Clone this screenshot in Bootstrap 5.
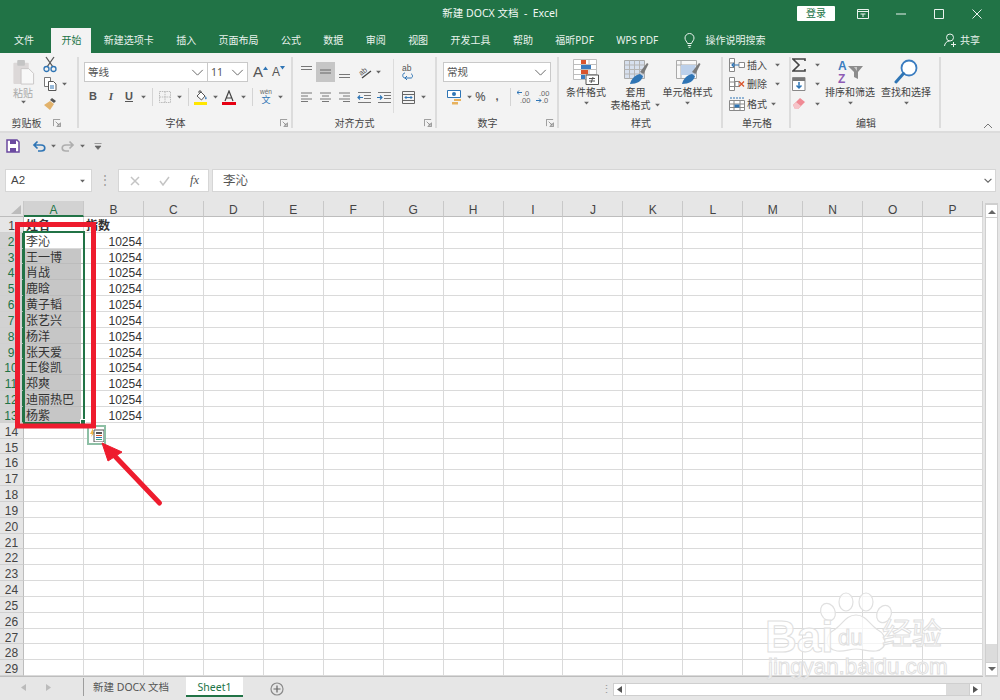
<!DOCTYPE html>
<html lang="zh">
<head>
<meta charset="utf-8">
<title>新建 DOCX 文档 - Excel</title>
<link href="https://cdn.jsdelivr.net/npm/bootstrap@5.3.0/dist/css/bootstrap.min.css" rel="stylesheet">
<style>
html,body{margin:0;height:700px;overflow:hidden;background:#e6e6e6}
body{font-family:"Noto Sans","Noto Sans CJK SC",sans-serif;font-size:10px;line-height:1.2;color:#444}
svg{display:block;flex:none}
.xl-app{width:1000px;height:700px;position:relative;overflow:hidden}
.xl-title{height:27px;background:#217346;color:#f2f8f4;font-size:10.5px}
.xl-side{flex:1 1 0}
.xl-login{width:38px;height:15px;background:#fff;color:#217346;margin-right:9px;font-size:10px;line-height:15px;text-align:center;border-radius:1px}
.xl-win{width:38px;height:27px}
.xl-tabs{height:26px;background:#217346;color:#e9f2ed;padding-left:4px;gap:2.4px}
.xl-tab{padding:0 10px;line-height:26px;white-space:nowrap;font-size:10px}
.xl-tab-on{background:#f3f3f3;color:#217346;margin-left:5px;margin-top:1px;line-height:25px}
.xl-tell{margin-left:13px;gap:11px}
.xl-share{margin-left:auto;padding-right:20px;gap:3px;line-height:26px}
.xl-ribbon{height:80px;background:#f3f3f3;border-bottom:2px solid #dcdcdc;position:relative}
.xl-g{display:flex;flex-direction:column;flex:none;position:relative}
.xl-g::after{content:"";position:absolute;right:0;top:4px;bottom:3px;width:2px;background:#dcdcdc}
.xl-body{height:62px;display:flex}
.xl-lab{height:15px;display:flex;align-items:center;font-size:10px;color:#444}
.xl-lab span{flex:1;text-align:center}
.xl-lab svg{margin-right:5px}
.g1{width:79px}.g2{width:214px}.g3{width:144px}.g4{width:122px}.g5{width:164px}.g6{width:68px}.g7{width:150px}
.xl-lab-l{padding-right:13px}
.xl-paste{width:46px;text-align:center;color:#a9a9a9;padding-top:6px}
.xl-paste svg{margin:0 auto}
.xl-paste div{margin-top:2px;line-height:13px}
.xl-mini{padding-top:2px;margin-left:-3px}
.xl-mini>div{height:19.5px;display:flex;align-items:center}
.xl-p2{padding:9px 0 0 5px}
.xl-combo{height:20px;background:#fff;border:1px solid #c9c9c9;display:flex;align-items:center;justify-content:space-between;padding:0 3px;font-size:10.5px;color:#555}
.xl-c1{width:124px}.xl-c2{width:41px;margin-left:-1px}.xl-c3{width:108px}
.xl-row{display:flex;align-items:center;height:20px}
.xl-row2{margin-top:5px}
.xl-slot{display:flex;justify-content:center;align-items:center;flex:none;height:20px}
.s18{width:18px}.s10{width:10px}.s8{width:8px}.s19{width:19px}.s20{width:20px}.s15{width:15px}.s22{width:22px}
.xl-bi{font-family:"Liberation Sans",sans-serif;font-weight:700;font-size:11px;color:#555}
.xl-it{font-style:italic;font-family:"Liberation Serif",serif}
.xl-un{text-decoration:underline}
.xl-big{font-family:"Liberation Sans",sans-serif;font-size:15px;color:#555}
.xl-sm{font-size:12px}
.xl-aa{margin-left:5px;gap:3px}
.xl-vsep{width:1px;height:18px;background:#d4d4d4}
.xl-on{background:#c6c6c6}
.xl-p3{padding:9px 0 0 4px}
.xl-pct{font-size:13px;color:#555}
.xl-vbar{width:1px;height:54px;background:#dcdcdc;margin-top:6px}
.xl-p4{padding:9px 0 0 6px}
.xl-tool{display:flex;flex-direction:column;align-items:center;text-align:center;padding-top:6px;line-height:13px;white-space:nowrap;flex:none}
.xl-tool svg{margin-bottom:1px}
.xl-tool .xl-cap{margin:2px auto 0}
.t54{width:54px}.t45{width:45px}.t59{width:59px}.t60{width:60px}.t52{width:52px}
.xl-line2{display:flex;align-items:center;gap:3px;white-space:nowrap}
.xl-cell{display:flex;align-items:center;height:19.5px;padding-left:6px;gap:1px}
.xl-cell span{width:27px;padding-left:1px}
.xl-cell span.xl-w22{width:23px}
.xl-stack{padding-top:2px;width:68px}
.xl-sig{width:33px;padding:2px 0 0 1px}
.xl-sig>div{height:19.5px;display:flex;align-items:center;gap:8px}
.xl-collapse{position:absolute;right:7px;bottom:2px}
.xl-qat{height:26px;padding-left:6px;background:#e6e6e6}
.xl-fbar{height:42px;padding:10px 4px 9px 5px;background:#e6e6e6}
.xl-name{width:87px;background:#fff;border:1px solid #d6d6d6;padding:0 5px;font-family:"Liberation Sans",sans-serif;font-size:11.5px;color:#444}
.xl-dots{width:26px;color:#999;font-size:12px;text-align:center}
.xl-fx{width:91px;background:#fff;border:1px solid #d6d6d6;margin-right:3px;padding:0 9px 0 11px}
.xl-fxt{font-family:"Liberation Serif",serif;font-style:italic;font-size:12.5px;color:#555}
.xl-input{flex:1;background:#fff;border:1px solid #d6d6d6;padding:0 3px 0 10px;font-size:12.5px;color:#555}
.xl-main{height:476px;position:relative}
.xl-sheet{position:relative;width:983px;display:grid;grid-template-columns:24px repeat(16,59.94px);grid-template-rows:16px repeat(29,15.83px);background:#fff;font-family:"Liberation Sans","Noto Sans CJK SC",sans-serif;font-size:12px;color:#333;border-bottom:1px solid #bdbdbd;overflow:hidden}
.xc{border-right:1px solid #dadada;border-bottom:1px solid #dadada;padding:2px 2px 0;line-height:14px;white-space:nowrap;overflow:visible;min-width:0}
.xh{background:#e6e6e6;border-right:1px solid #c8c8c8;border-bottom:1px solid #bdbdbd;text-align:center;color:#444;padding:2px 0 0}
.xh-corner{padding:0}
.xh-on{background:#d2d2d2;color:#217346;border-bottom:2px solid #217346}
.xr{background:#e6e6e6;border-right:1px solid #bdbdbd;border-bottom:1px solid #d0d0d0;text-align:center;color:#444;padding:2px 0 0}
.xr-on{background:#d2d2d2;color:#217346;border-right:2px solid #217346}
.xn{text-align:right;padding-right:1px}
.xb{font-weight:700}
.xs{background:#c6c6c6;border-bottom-color:#bcbcbc;box-shadow:inset -2px 0 0 #fff}
.xl-outline{position:absolute;left:23px;top:30px;width:62px;height:193px;border:2px solid #217346;pointer-events:none}
.xl-handle{position:absolute;right:-3px;bottom:-3px;width:6px;height:6px;background:#217346;border:1px solid #fff}
.xl-tag{position:absolute;left:87px;top:224px;width:19px;height:20px;border:2px solid #8dbfa5;background:#fff;display:flex;align-items:center;justify-content:center}
.xl-vs{position:absolute;right:2px;top:2px;bottom:0;width:13px;background:#fff;border:1px solid #cfcfcf;display:flex;flex-direction:column}
.xl-vbtn{height:14px;background:#fff;border:1px solid #cfcfcf;margin:0 -1px;display:flex;align-items:center;justify-content:center;flex:none}
.xl-vth{flex:1}.xl-vtr{height:18px;background:#dcdcdc}
.xl-foot{height:23px;background:#e6e6e6}
.xl-nav{width:84px;border-right:1px solid #9d9d9d;height:18px;padding-left:21px;gap:20px;margin-top:-3px}
.xl-stab{padding:0 9px 0 9px;font-size:10.5px;color:#555;width:102px;text-align:left;height:20px;line-height:20px;margin-top:-3px}
.xl-stab-on{width:57px;background:#fff;color:#217346;border-bottom:2px solid #217346;text-align:center;padding:0}
.xl-plus{margin-left:27px}
.xl-gap{margin-left:315px;color:#999;width:14px;font-size:11px}
.xl-hs{width:369px;height:13px;background:#dcdcdc;border:1px solid #cfcfcf;display:flex;margin-top:1px}
.xl-hb{width:12px;background:#fff;border-right:1px solid #cfcfcf;display:flex;align-items:center;justify-content:center;flex:none}
.xl-hth{width:320px;background:#fff}
.xl-hsp{flex:1}
.xl-hb-r{border-right:0;border-left:1px solid #cfcfcf}
.xl-overlay{position:absolute;left:0;top:0;pointer-events:none}
.xl-wm{position:absolute;left:760px;top:590px;width:195px;height:90px;pointer-events:none;color:rgba(255,255,255,.75);-webkit-text-stroke:1px #e0e0e0;font-family:"Liberation Sans",sans-serif}
.xl-wm-a,.xl-wm-b,.xl-wm-c,.xl-wm-d{position:absolute;white-space:nowrap;line-height:.9}
.xl-wm-a{left:5px;top:27px;font-size:44px;font-weight:700}
.xl-wm-b{left:78px;top:38px;font-size:22px}
.xl-wm-c{left:122px;top:28px;font-size:30px;font-family:"Noto Sans CJK SC",sans-serif}
.xl-wm-d{left:8px;top:67px;font-size:22.5px;letter-spacing:-.1px}
.xl-paw{position:absolute;left:0;top:0}
</style>
</head>
<body>
<svg width="0" height="0" class="position-absolute">
<symbol id="cr" viewBox="0 0 8 5"><path d="M1 1h6L4 4.500z" fill="#666"/></symbol>
<symbol id="chev" viewBox="0 0 14 8"><path d="M1 1l6 6 6-6" fill="none" stroke="#666" stroke-width="1.100"/></symbol>
<symbol id="lau" viewBox="0 0 9 9"><path d="M.5 8V.5H8M8.500 4v4.500H4M3 3l4 4M7 4.500V7H4.500" fill="none" stroke="#777" stroke-width=".8"/></symbol>
</svg>
<div class="xl-app">

<div class="xl-title d-flex align-items-center">
  <div class="xl-side"></div>
  <div class="text-nowrap">新建 DOCX 文档&nbsp; - &nbsp;Excel</div>
  <div class="xl-side d-flex align-items-center justify-content-end">
    <div class="xl-login">登录</div>
    <div class="xl-win d-flex align-items-center justify-content-center"><svg width="12" height="11" viewBox="0 0 12 11"><path d="M.5 1.500h11v9H.5zM.5 3.500h11M3.500 6h5M6 6v3" fill="none" stroke="#eaf3ee"/></svg></div>
    <div class="xl-win d-flex align-items-center justify-content-center"><svg width="10" height="2"><path d="M0 1h10" stroke="#eaf3ee"/></svg></div>
    <div class="xl-win d-flex align-items-center justify-content-center"><svg width="10" height="10"><path d="M.5.500h9v9h-9z" fill="none" stroke="#eaf3ee"/></svg></div>
    <div class="xl-win d-flex align-items-center justify-content-center me-1"><svg width="10" height="10"><path d="M.5.500l9 9M9.500.500l-9 9" stroke="#eaf3ee"/></svg></div>
  </div>
</div>

<div class="xl-tabs d-flex">
  <div class="xl-tab">文件</div>
  <div class="xl-tab xl-tab-on">开始</div>
  <div class="xl-tab">新建选项卡</div>
  <div class="xl-tab">插入</div>
  <div class="xl-tab">页面布局</div>
  <div class="xl-tab">公式</div>
  <div class="xl-tab">数据</div>
  <div class="xl-tab">审阅</div>
  <div class="xl-tab">视图</div>
  <div class="xl-tab">开发工具</div>
  <div class="xl-tab">帮助</div>
  <div class="xl-tab">福昕PDF</div>
  <div class="xl-tab">WPS PDF</div>
  <div class="xl-tell d-flex align-items-center">
    <svg width="11" height="15" viewBox="0 0 11 15"><path d="M3.500 10.500C3 8.500 1 7.500 1 5a4.500 4.500 0 0 1 9 0c0 2.500-2 3.500-2.500 5.500zM3.800 12.500h3.400M4.500 14.300h2" fill="none" stroke="#eaf3ee"/></svg>
    <span>操作说明搜索</span>
  </div>
  <div class="xl-share d-flex align-items-center">
    <svg width="13" height="14" viewBox="0 0 13 14"><circle cx="6" cy="4.500" r="3.500" fill="none" stroke="#eaf3ee"/><path d="M.5 13c.3-3 2.500-5 5-5M9.500 9v5M7 11.500h5" fill="none" stroke="#eaf3ee"/></svg>
    <span>共享</span>
  </div>
</div>

<div class="xl-ribbon d-flex">
  <!-- clipboard -->
  <div class="xl-g g1">
    <div class="xl-body">
      <div class="xl-paste">
        <svg width="26" height="26" viewBox="-2 0 26 27"><rect x="1" y="4" width="16" height="22" rx="1" fill="#dcd8d8"/><rect x="5" y="1" width="8" height="6" rx="1" fill="#c4c4c4"/><path d="M9 10h8l5 5v11H9z" fill="#f8f8f8" stroke="#c9c6c6"/></svg>
        <div>粘贴</div>
        <svg width="7" height="4"><use href="#cr"/></svg>
      </div>
      <div class="xl-mini">
        <div><svg width="14" height="17" viewBox="0 0 14 17"><path d="M3 1l7 10M11 1L4 11" stroke="#555" stroke-width="1.300"/><circle cx="3.500" cy="13" r="2.500" fill="none" stroke="#2f75b5" stroke-width="1.300"/><circle cx="10.500" cy="13" r="2.500" fill="none" stroke="#2f75b5" stroke-width="1.300"/></svg></div>
        <div class="gap-1"><svg width="14" height="14" viewBox="0 0 14 14"><path d="M1.500.500h6v9h-6z" fill="#fff" stroke="#777"/><path d="M5.500 4.500h5l2.500 2.500v6.500H5.500z" fill="#fff" stroke="#555"/><path d="M7 9h4M7 11h4" stroke="#2f75b5"/></svg><svg width="7" height="4"><use href="#cr"/></svg></div>
        <div><svg width="14" height="14" viewBox="0 0 14 14"><path d="M9 1l4 3-2 2-4-3z" fill="#555"/><path d="M7 4l4 3-4 6-6-5z" fill="#e2b26b"/></svg></div>
      </div>
    </div>
    <div class="xl-lab xl-lab-l"><span>剪贴板</span><svg width="8" height="8"><use href="#lau"/></svg></div>
  </div>
  <!-- font -->
  <div class="xl-g g2">
    <div class="xl-body xl-p2 flex-column">
      <div class="xl-row">
        <div class="xl-combo xl-c1"><span>等线</span><svg width="13" height="7"><use href="#chev"/></svg></div>
        <div class="xl-combo xl-c2"><span>11</span><svg width="13" height="7"><use href="#chev"/></svg></div>
        <div class="xl-aa d-flex">
          <div class="xl-slot s15 xl-big">A<svg width="5" height="4" viewBox="0 0 5 4" class="align-self-start mt-1"><path d="M0 4l2.500-3.500L5 4z" fill="#2f75b5"/></svg></div>
          <div class="xl-slot s15 xl-big xl-sm">A<svg width="5" height="4" viewBox="0 0 5 4" class="align-self-start mt-1"><path d="M0 0l2.500 3.500L5 0z" fill="#2f75b5"/></svg></div>
        </div>
      </div>
      <div class="xl-row xl-row2">
        <div class="xl-slot s18 xl-bi">B</div>
        <div class="xl-slot s18 xl-bi xl-it">I</div>
        <div class="xl-slot s18 xl-bi xl-un">U</div>
        <div class="xl-slot s10"><svg width="7" height="4"><use href="#cr"/></svg></div>
        <div class="xl-slot s8"><div class="xl-vsep"></div></div>
        <div class="xl-slot s18"><svg width="12" height="12" viewBox="0 0 12 12"><path d="M.5.500h11v11H.5zM6 .5v11M.5 6h11" fill="none" stroke="#bbb" stroke-dasharray="1.500 .8"/></svg></div>
        <div class="xl-slot s10"><svg width="7" height="4"><use href="#cr"/></svg></div>
        <div class="xl-slot s8"><div class="xl-vsep"></div></div>
        <div class="xl-slot s18"><svg width="14" height="15" viewBox="0 0 14 15"><path d="M3 6l4-4 4 4-3.500 4z" fill="#fff" stroke="#555"/><path d="M5 3V1h2v2" fill="none" stroke="#555"/><path d="M11.500 6c1.200 1.500 1.500 2.500.8 3.200-.8.500-1.500-.4-1-1.500z" fill="#2f75b5"/><rect y="12" width="13" height="3" fill="#ffe600"/></svg></div>
        <div class="xl-slot s10"><svg width="7" height="4"><use href="#cr"/></svg></div>
        <div class="xl-slot s18 flex-column"><svg width="14" height="15" viewBox="0 0 14 15"><path d="M3 11L7 1l4 10M4.500 8h5" fill="none" stroke="#444" stroke-width="1.200"/><rect y="12" width="14" height="3" fill="#e60012"/></svg></div>
        <div class="xl-slot s10"><svg width="7" height="4"><use href="#cr"/></svg></div>
        <div class="xl-slot s8"><div class="xl-vsep"></div></div>
        <div class="xl-slot s20"><svg width="18" height="20" viewBox="0 0 18 20"><text x="9" y="7" text-anchor="middle" font-size="6.500" fill="#666" font-family="Liberation Sans">wén</text><text x="9" y="16" text-anchor="middle" font-size="9" fill="#2f75b5" font-family="Noto Sans CJK SC">文</text></svg></div>
        <div class="xl-slot s8"><svg width="7" height="4"><use href="#cr"/></svg></div>
      </div>
    </div>
    <div class="xl-lab"><span>字体</span><svg width="8" height="8" class="ms-2"><use href="#lau"/></svg></div>
  </div>
  <!-- align -->
  <div class="xl-g g3">
    <div class="xl-body">
      <div class="xl-p3">
        <div class="xl-row">
          <div class="xl-slot s19"><svg width="13" height="16" viewBox="0 0 13 16"><path d="M1 2.500h11M1 5.500h11" stroke="#777"/></svg></div>
          <div class="xl-slot s19 xl-on"><svg width="13" height="10" viewBox="0 0 13 10"><path d="M1 3h11M1 6h11" stroke="#666"/></svg></div>
          <div class="xl-slot s19"><svg width="13" height="16" viewBox="0 0 13 16"><path d="M1 10.500h11M1 13.500h11" stroke="#777"/></svg></div>
          <div class="xl-slot s20"><svg width="20" height="20" viewBox="0 0 20 20"><text x="5" y="12" font-size="7.500" fill="#555" font-family="Liberation Sans" transform="rotate(-40 9 10)">ab</text><path d="M8 16L17 9" stroke="#444" stroke-width="1.300"/></svg></div>
          <div class="xl-slot s8"><svg width="7" height="4"><use href="#cr"/></svg></div>
        </div>
        <div class="xl-row xl-row2">
          <div class="xl-slot s19"><svg width="13" height="10" viewBox="0 0 13 10"><path d="M1 1h11M1 4h7M1 7h11M1 9.500h7" stroke="#777"/></svg></div>
          <div class="xl-slot s19"><svg width="13" height="10" viewBox="0 0 13 10"><path d="M1 1h11M3 4h7M1 7h11M3 9.500h7" stroke="#777"/></svg></div>
          <div class="xl-slot s19"><svg width="13" height="10" viewBox="0 0 13 10"><path d="M1 1h11M5 4h7M1 7h11M5 9.500h7" stroke="#777"/></svg></div>
          <div class="xl-slot s20"><svg width="14" height="11" viewBox="0 0 14 11"><path d="M1 5.500h5M3 3.500l-2 2 2 2" fill="none" stroke="#2f75b5" stroke-width="1.200"/><path d="M1 .5h13M7 3.500h7M7 6.500h7M1 10.500h13" stroke="#777"/></svg></div>
          <div class="xl-slot s19"><svg width="14" height="11" viewBox="0 0 14 11"><path d="M0 5.500h5M3 3.500l2 2-2 2" fill="none" stroke="#2f75b5" stroke-width="1.200"/><path d="M1 .5h13M7 3.500h7M7 6.500h7M1 10.500h13" stroke="#777"/></svg></div>
        </div>
      </div>
      <div class="xl-vbar"></div>
      <div class="xl-p3">
        <div class="xl-row"><div class="xl-slot s20"><svg width="14" height="18" viewBox="0 0 14 18"><text x="1" y="8" font-size="8.500" fill="#555" font-family="Liberation Sans">ab</text><path d="M4 10C1 10 1 15 4 15h6c2 0 2-4 0-4M6 13l-2 2 2 2" fill="none" stroke="#2f75b5"/></svg></div></div>
        <div class="xl-row xl-row2">
          <div class="xl-slot s20"><svg width="13" height="13" viewBox="0 0 13 13"><path d="M.5.500h12v12H.5zM.5 3.500h12M.5 9.500h12" fill="none" stroke="#666"/><path d="M3 6.500h7M4.500 5l-1.500 1.500L4.500 8M8.500 5L10 6.500 8.500 8" fill="none" stroke="#2f75b5"/></svg></div>
          <div class="xl-slot s10"><svg width="7" height="4"><use href="#cr"/></svg></div>
        </div>
      </div>
    </div>
    <div class="xl-lab"><span>对齐方式</span><svg width="8" height="8" class="ms-2"><use href="#lau"/></svg></div>
  </div>
  <!-- number -->
  <div class="xl-g g4">
    <div class="xl-body xl-p4 flex-column">
      <div class="xl-combo xl-c3"><span>常规</span><svg width="13" height="7"><use href="#chev"/></svg></div>
      <div class="xl-row xl-row2">
        <div class="xl-slot s22"><svg width="15" height="15" viewBox="0 0 15 15"><path d="M.5.500h13v7H.5z" fill="#fff" stroke="#2f75b5"/><circle cx="7" cy="4" r="2" fill="#2f75b5"/><path d="M7 9h7v2H7zM5 12h6v2.500H5z" fill="#e7b15d"/></svg></div>
        <div class="xl-slot s8"><svg width="7" height="4"><use href="#cr"/></svg></div>
        <div class="xl-slot s15 xl-pct">%</div>
        <div class="xl-slot s18 xl-bi">,</div>
        <div class="xl-slot s8"><div class="xl-vsep"></div></div>
        <div class="xl-slot s19"><svg width="14" height="16" viewBox="0 0 14 16"><path d="M0 3.500h5M2 1.500l-2 2 2 2" fill="none" stroke="#2f75b5"/><text x="6" y="6.500" font-size="7.500" fill="#666" font-family="Liberation Sans">.0</text><text x="3" y="14" font-size="7.500" fill="#666" font-family="Liberation Sans">.00</text></svg></div>
        <div class="xl-slot s19"><svg width="14" height="16" viewBox="0 0 14 16"><text x="3" y="6.500" font-size="7.500" fill="#666" font-family="Liberation Sans">.00</text><path d="M0 11.500h5M3 9.500l2 2-2 2" fill="none" stroke="#2f75b5"/><text x="6" y="14" font-size="7.500" fill="#666" font-family="Liberation Sans">.0</text></svg></div>
      </div>
    </div>
    <div class="xl-lab"><span>数字</span><svg width="8" height="8" class="ms-2"><use href="#lau"/></svg></div>
  </div>
  <!-- styles -->
  <div class="xl-g g5">
    <div class="xl-body">
      <div class="xl-tool t54">
        <svg width="26" height="26" viewBox="0 0 26 26"><path d="M.5.500h23v20H.5zM8.500.5v20M16 .5v20M.5 5.500h23M.5 10.500h23M.5 15.500h23" fill="#fff" stroke="#bdbdbd"/><path d="M8 1h5v4H8z" fill="#d9542c"/><path d="M8 6h10v4H8z" fill="#3a7cc0"/><path d="M8 11h7v4H8z" fill="#d9542c"/><path d="M8 16h4v4H8z" fill="#3a7cc0"/><path d="M13 16h12.500v9.500H13z" fill="#fff" stroke="#555"/><path d="M16 19.500h6M16 22h6M18 24l2-6" stroke="#555"/></svg>
        <div>条件格式</div>
        <svg class="xl-cap" width="7" height="4"><use href="#cr"/></svg>
      </div>
      <div class="xl-tool t45">
        <svg width="26" height="26" viewBox="0 0 26 26"><path d="M1.500 1.500h20v18h-20z" fill="#d7e0ee" stroke="#aaa"/><path d="M6.500 1.500v18M11.500 1.500v18M16.500 1.500v18M1.500 6h20M1.500 10.500h20M1.500 15h20" stroke="#b5b5b5" fill="none"/><path d="M17 13l7-9 1.500 1-5 10z" fill="#7a7a7a"/><path d="M7 25c1-5 5-9 10-10l3 2c-1 5-6 8-13 8z" fill="#2f75b5"/></svg>
        <div>套用</div>
        <div class="xl-line2">表格格式<svg width="7" height="4"><use href="#cr"/></svg></div>
      </div>
      <div class="xl-tool t59">
        <svg width="26" height="26" viewBox="0 0 26 26"><path d="M1.500 1.500h20v18h-20zM1.500 6h20M6 1.500v18" fill="#f8f8f8" stroke="#aaa"/><path d="M6 6h14.500v10H6z" fill="#bcd0ea"/><path d="M17 13l7-9 1.500 1-5 10z" fill="#7a7a7a"/><path d="M7 25c1-5 5-9 10-10l3 2c-1 5-6 8-13 8z" fill="#2f75b5"/></svg>
        <div>单元格样式</div>
        <svg class="xl-cap" width="7" height="4"><use href="#cr"/></svg>
      </div>
    </div>
    <div class="xl-lab"><span>样式</span></div>
  </div>
  <!-- cells -->
  <div class="xl-g g6">
    <div class="xl-body">
      <div class="xl-stack">
        <div class="xl-cell"><svg width="16" height="14" viewBox="0 0 16 14"><path d="M.5.500h5v13h-5zM.5 5h5M.5 9.500h5M10 4.500h5.500v5H10z" fill="#fff" stroke="#888"/><path d="M3 7h7M5 5l-2 2 2 2" fill="none" stroke="#2f75b5" stroke-width="1.200"/></svg><span>插入</span><svg width="7" height="4"><use href="#cr"/></svg></div>
        <div class="xl-cell"><svg width="16" height="14" viewBox="0 0 16 14"><path d="M.5.500h5v13h-5zM.5 5h5M.5 9.500h5M6 4.500h4v5H6z" fill="#fff" stroke="#888"/><path d="M10 4.500l5 5M15 4.500l-5 5" stroke="#d9542c" stroke-width="1.300"/></svg><span>删除</span><svg width="7" height="4"><use href="#cr"/></svg></div>
        <div class="xl-cell"><svg width="16" height="14" viewBox="0 0 16 14"><path d="M.5 3.500h15v10H.5zM.5 7h15M.5 10.500h15M5 3.500v10M11 3.500v10" fill="#fff" stroke="#888"/><path d="M5.500 7.500h5v3h-5z" fill="#2f75b5"/><path d="M1 1h14" stroke="#2f75b5" stroke-dasharray="2 1"/></svg><span class="xl-w22">格式</span><svg width="7" height="4"><use href="#cr"/></svg></div>
      </div>
    </div>
    <div class="xl-lab"><span>单元格</span></div>
  </div>
  <!-- editing -->
  <div class="xl-g g7">
    <div class="xl-body">
      <div class="xl-sig">
        <div><svg width="14" height="14" viewBox="0 0 14 14"><path d="M13 3V1H1l6 6-6 6h12v-2" fill="none" stroke="#444" stroke-width="1.600"/></svg><svg width="7" height="4"><use href="#cr"/></svg></div>
        <div><svg width="14" height="14" viewBox="0 0 14 14"><path d="M.5.500h12.500v13H.5z" fill="#fff" stroke="#888"/><path d="M1 1h12v3H1z" fill="#777"/><path d="M7 5v6M4.500 8.500L7 11l2.500-2.500" fill="none" stroke="#2f75b5" stroke-width="1.500"/></svg><svg width="7" height="4"><use href="#cr"/></svg></div>
        <div><svg width="14" height="13" viewBox="0 0 14 13"><path d="M1 8l7-7 5 4-7 7H3z" fill="#f08a94"/><path d="M1 8l3-3 5 4-3 3H3z" fill="#f6c3c8"/></svg><svg width="7" height="4"><use href="#cr"/></svg></div>
      </div>
      <div class="xl-tool t52">
        <svg width="28" height="26" viewBox="0 0 28 26"><text x="2" y="11" font-size="12" font-weight="700" fill="#3a7cc0" font-family="Liberation Sans">A</text><text x="2" y="24" font-size="12" font-weight="700" fill="#8e5bb5" font-family="Liberation Sans">Z</text><path d="M12 7h15l-5 6v7l-4-2v-5z" fill="#8c8c8c"/><path d="M14 8h4l3 4v-4h3" fill="#c8c8c8"/></svg>
        <div>排序和筛选</div>
        <svg class="xl-cap" width="7" height="4"><use href="#cr"/></svg>
      </div>
      <div class="xl-tool t60">
        <svg width="24" height="26" viewBox="0 0 24 26"><circle cx="15" cy="9" r="7.500" fill="#fff" stroke="#3a7cc0" stroke-width="1.800"/><path d="M9.500 14.500L2 23" stroke="#2f75b5" stroke-width="3" stroke-linecap="round"/></svg>
        <div>查找和选择</div>
        <svg class="xl-cap" width="7" height="4"><use href="#cr"/></svg>
      </div>
    </div>
    <div class="xl-lab"><span>编辑</span></div>
  </div>
  <svg class="xl-collapse" width="10" height="6" viewBox="0 0 10 6"><path d="M1 5l4-4 4 4" fill="none" stroke="#777"/></svg>
</div>

<div class="xl-qat d-flex align-items-center">
  <svg width="14" height="14" viewBox="0 0 14 14" class="me-2"><path d="M1 1h10l2 2v10H1z" fill="#fff" stroke="#6b4aa0" stroke-width="1.500"/><path d="M4 1h6v4H4zM4 9h6v4H4z" fill="#6b4aa0"/></svg>
  <svg width="14" height="12" viewBox="0 0 14 12" class="ms-1"><path d="M3 5h6c5 0 5 6 0 6H6M5.500 1.500L2 5l3.500 3.500" fill="none" stroke="#2f75b5" stroke-width="1.700"/></svg>
  <svg width="7" height="4" class="ms-1"><use href="#cr"/></svg>
  <svg width="14" height="12" viewBox="0 0 14 12" class="ms-1"><path d="M11 5H5c-5 0-5 6 0 6h3M8.500 1.500L12 5 8.500 8.500" fill="none" stroke="#aeaeae" stroke-width="1.700"/></svg>
  <svg width="7" height="4" class="ms-1"><use href="#cr"/></svg>
  <svg width="8" height="7" viewBox="0 0 8 7" class="ms-2"><path d="M.5.500h7M1 3h6L4 6.500z" fill="#666" stroke="#666" stroke-width=".6"/></svg>
</div>

<div class="xl-fbar d-flex">
  <div class="xl-name d-flex align-items-center justify-content-between"><span>A2</span><svg width="7" height="4"><use href="#cr"/></svg></div>
  <div class="xl-dots d-flex align-items-center justify-content-center">⋮</div>
  <div class="xl-fx d-flex align-items-center justify-content-between">
    <svg width="10" height="10"><path d="M1 1l8 8M9 1L1 9" stroke="#c4c4c4" stroke-width="1.500"/></svg>
    <svg width="11" height="10"><path d="M1 5l3 4 6-8" fill="none" stroke="#c4c4c4" stroke-width="1.500"/></svg>
    <span class="xl-fxt">fx</span>
  </div>
  <div class="xl-input d-flex align-items-center justify-content-between"><span>李沁</span><svg width="8" height="5" viewBox="0 0 14 8"><path d="M1 1l6 6 6-6" fill="none" stroke="#666" stroke-width="2"/></svg></div>
</div>

<div class="xl-main">
  <div class="xl-sheet" id="xlSheet"></div>
  <div class="xl-outline"><div class="xl-handle"></div></div>
  <div class="xl-tag"><svg width="14" height="14" viewBox="0 0 14 14"><path d="M3 0L0 6h2L1 9l4-5H3z" fill="#f2b84b"/><path d="M4 2h10v12H4z" fill="#fff" stroke="#555"/><path d="M6 4h6v2H6z" fill="#555"/><path d="M6 7.500h6" stroke="#d9542c"/><path d="M6 9.500h6" stroke="#2f75b5"/><path d="M6 11.500h6" stroke="#3aa37a"/></svg></div>
  <div class="xl-vs">
    <div class="xl-vbtn"><svg width="8" height="5"><path d="M0 5l4-4 4 4z" fill="#666"/></svg></div>
    <div class="xl-vth"></div>
    <div class="xl-vtr"></div>
    <div class="xl-vbtn"><svg width="8" height="5"><path d="M0 0l4 4 4-4z" fill="#666"/></svg></div>
  </div>
</div>

<div class="xl-foot d-flex align-items-center">
  <div class="xl-nav d-flex align-items-center">
    <svg width="5" height="7"><path d="M5 0L0 3.500 5 7z" fill="#bbb"/></svg>
    <svg width="5" height="7"><path d="M0 0l5 3.500L0 7z" fill="#bbb"/></svg>
  </div>
  <div class="xl-stab">新建 DOCX 文档</div>
  <div class="xl-stab xl-stab-on">Sheet1</div>
  <svg class="xl-plus" width="14" height="14" viewBox="0 0 14 14"><circle cx="7" cy="7" r="6" fill="none" stroke="#8a8a8a" stroke-width="1.200"/><path d="M3.500 7h7M7 3.500v7" stroke="#666" stroke-width="1.200"/></svg>
  <div class="xl-gap text-center">⋮</div>
  <div class="xl-hs">
    <div class="xl-hb"><svg width="5" height="7"><path d="M5 0L0 3.500 5 7z" fill="#555"/></svg></div>
    <div class="xl-hth"></div>
    <div class="xl-hsp"></div>
    <div class="xl-hb xl-hb-r"><svg width="5" height="7"><path d="M0 0l5 3.500L0 7z" fill="#555"/></svg></div>
  </div>
</div>

<div class="xl-wm">
  <svg class="xl-paw" width="195" height="90" viewBox="0 0 195 90"><g fill="rgba(255,255,255,.7)" stroke="#e0e0e0" stroke-width="1.200"><ellipse cx="68" cy="22" rx="7" ry="9" transform="rotate(-25 68 22)"/><ellipse cx="86" cy="12" rx="7" ry="9"/><ellipse cx="106" cy="12" rx="7" ry="9"/><ellipse cx="124" cy="24" rx="7" ry="9" transform="rotate(25 124 24)"/><path d="M96 25c-10 0-14 10-22 15-9 5-10 19 3 21 8 1 12-2 19-2s12 3 20 2c12-2 11-16 2-21-8-5-12-15-22-15z"/></g></svg>
  <div class="xl-wm-a">Bai</div>
  <div class="xl-wm-b">du</div>
  <div class="xl-wm-c">经验</div>
  <div class="xl-wm-d">jingyan.baidu.com</div>
</div>

<svg class="xl-overlay" width="1000" height="700" viewBox="0 0 1000 700">
  <rect x="17.500" y="224.500" width="76" height="201.500" fill="none" stroke="#ee1c2e" stroke-width="5"/>
  <path d="M159.500 503L110 451" stroke="#ee1c2e" stroke-width="5" stroke-linecap="round"/>
  <path d="M102 443l20 9-14 9z" fill="#ee1c2e" stroke="#ee1c2e" stroke-linejoin="round"/>
</svg>
</div>

<script>
(function(){
  var names=["李沁","王一博","肖战","鹿晗","黄子韬","张艺兴","杨洋","张天爱","王俊凯","郑爽","迪丽热巴","杨紫"];
  var cols="ABCDEFGHIJKLMNOP".split("");
  var h='<div class="xc xh xh-corner"><svg width="23" height="15" viewBox="0 0 23 15"><path d="M21 4v9H11z" fill="#bcbcbc"/></svg></div>';
  cols.forEach(function(c){h+='<div class="xc xh'+(c==="A"?" xh-on":"")+'">'+c+'</div>';});
  for(var r=1;r<=29;r++){
    var on=r>=2&&r<=13;
    h+='<div class="xc xr'+(on?" xr-on":"")+'">'+r+'</div>';
    for(var i=0;i<16;i++){
      var cls="xc",t="";
      if(i===0&&r===1){cls+=" xb";t="姓名";}
      if(i===1&&r===1){cls+=" xb";t="指数";}
      if(i===0&&on){t=names[r-2];if(r>2)cls+=" xs";}
      if(i===1&&on){cls+=" xn";t="10254";}
      h+='<div class="'+cls+'">'+t+'</div>';
    }
  }
  document.getElementById("xlSheet").innerHTML=h;
})();
</script>
<script src="https://cdn.jsdelivr.net/npm/bootstrap@5.3.0/dist/js/bootstrap.bundle.min.js"></script>
</body>
</html>
